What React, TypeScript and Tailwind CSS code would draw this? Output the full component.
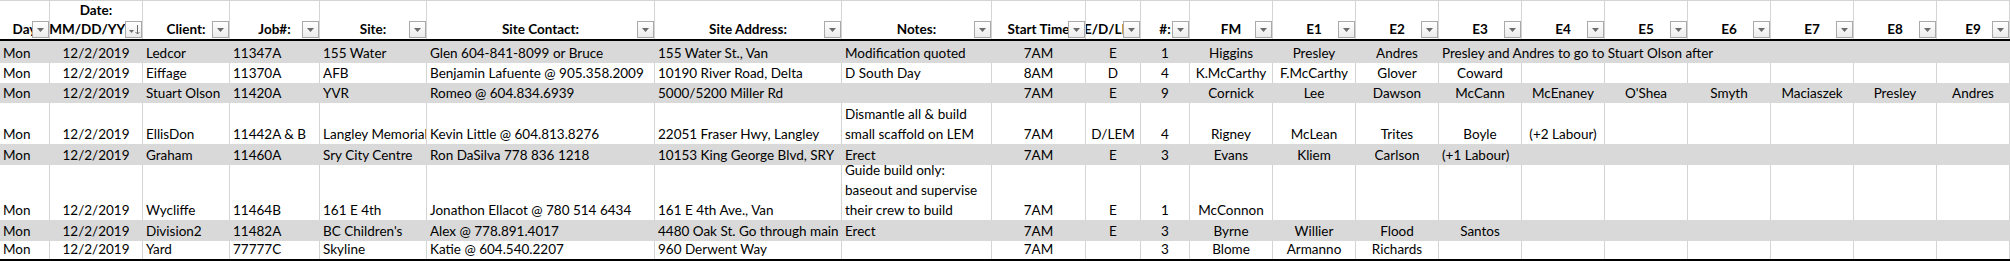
import React from 'react';

type Align = 'left' | 'center';
type Cell = string | string[] | { text: string; spill: true };

const COLS: { w: number; align: Align }[] = [
  { w: 50, align: 'left' },
  { w: 93, align: 'center' },
  { w: 87, align: 'left' },
  { w: 90, align: 'left' },
  { w: 107, align: 'left' },
  { w: 228, align: 'left' },
  { w: 187, align: 'left' },
  { w: 150, align: 'left' },
  { w: 94, align: 'center' },
  { w: 55, align: 'center' },
  { w: 49, align: 'center' },
  ...Array.from({ length: 9 }, () => ({ w: 83, align: 'center' as Align })),
  { w: 73, align: 'center' },
];

const HEADERS: string[][] = [
  ['Day'],
  ['Date:', 'MM/DD/YYYY'],
  ['Client:'],
  ['Job#:'],
  ['Site:'],
  ['Site Contact:'],
  ['Site Address:'],
  ['Notes:'],
  ['Start Time'],
  ['E/D/LEM'],
  ['#:'],
  ['FM'],
  ['E1'],
  ['E2'],
  ['E3'],
  ['E4'],
  ['E5'],
  ['E6'],
  ['E7'],
  ['E8'],
  ['E9'],
];

const ROWS: { h: string; gray: boolean; cells: Cell[] }[] = [
  {
    h: 'h-[22px]',
    gray: true,
    cells: ['Mon', '12/2/2019', 'Ledcor', '11347A', '155 Water', 'Glen 604-841-8099 or Bruce', '155 Water St., Van', 'Modification quoted', '7AM', 'E', '1', 'Higgins', 'Presley', 'Andres', { text: 'Presley and Andres to go to Stuart Olson after', spill: true }],
  },
  {
    h: 'h-[20px]',
    gray: false,
    cells: ['Mon', '12/2/2019', 'Eiffage', '11370A', 'AFB', 'Benjamin Lafuente @ 905.358.2009', '10190 River Road, Delta', 'D South Day', '8AM', 'D', '4', 'K.McCarthy', 'F.McCarthy', 'Glover', 'Coward'],
  },
  {
    h: 'h-[20px]',
    gray: true,
    cells: ['Mon', '12/2/2019', 'Stuart Olson', '11420A', 'YVR', 'Romeo @ 604.834.6939', '5000/5200 Miller Rd', '', '7AM', 'E', '9', 'Cornick', 'Lee', 'Dawson', 'McCann', 'McEnaney', "O'Shea", 'Smyth', 'Maciaszek', 'Presley', 'Andres'],
  },
  {
    h: 'h-[41px]',
    gray: false,
    cells: ['Mon', '12/2/2019', 'EllisDon', '11442A & B', 'Langley Memorial', 'Kevin Little @ 604.813.8276', '22051 Fraser Hwy, Langley', ['Dismantle all & build', 'small scaffold on LEM'], '7AM', 'D/LEM', '4', 'Rigney', 'McLean', 'Trites', 'Boyle', '(+2 Labour)'],
  },
  {
    h: 'h-[21px]',
    gray: true,
    cells: ['Mon', '12/2/2019', 'Graham', '11460A', 'Sry City Centre', 'Ron DaSilva 778 836 1218', '10153 King George Blvd, SRY', 'Erect', '7AM', 'E', '3', 'Evans', 'Kliem', 'Carlson', { text: '(+1 Labour)', spill: true }],
  },
  {
    h: 'h-[55px]',
    gray: false,
    cells: ['Mon', '12/2/2019', 'Wycliffe', '11464B', '161 E 4th', 'Jonathon Ellacot @ 780 514 6434', '161 E 4th Ave., Van', ['Guide build only:', 'baseout and supervise', 'their crew to build'], '7AM', 'E', '1', 'McConnon'],
  },
  {
    h: 'h-[21px]',
    gray: true,
    cells: ['Mon', '12/2/2019', 'Division2', '11482A', "BC Children's", 'Alex @ 778.891.4017', '4480 Oak St. Go through main', 'Erect', '7AM', 'E', '3', 'Byrne', 'Willier', 'Flood', 'Santos'],
  },
  {
    h: 'h-[18px]',
    gray: false,
    cells: ['Mon', '12/2/2019', 'Yard', '77777C', 'Skyline', 'Katie @ 604.540.2207', '960 Derwent Way', '', '7AM', '', '3', 'Blome', 'Armanno', 'Richards'],
  },
];

function FilterButton({ sorted }: { sorted?: boolean }) {
  return (
    <div className="absolute right-0 bottom-[1px] h-[17px] w-[17px] border border-[#a9a9a9] bg-gradient-to-b from-white to-[#ececec]">
      <svg width="15" height="15" viewBox="0 0 15 15" className="block">
        {sorted ? (
          <>
            <polygon points="3,8 8,8 5.5,11" fill="#6b6b6b" />
            <line x1="11.5" y1="3" x2="11.5" y2="12" stroke="#6b6b6b" strokeWidth="1" />
            <polyline points="9.5,10 11.5,12 13.5,10" fill="none" stroke="#6b6b6b" strokeWidth="1" />
          </>
        ) : (
          <polygon points="4,6 11,6 7.5,10" fill="#6b6b6b" />
        )}
      </svg>
    </div>
  );
}

export default function App() {
  return (
    <div
      className="w-[2010px] h-[261px] overflow-hidden bg-white text-black"
      style={{ fontFamily: 'Lato, "Liberation Sans", sans-serif' }}
    >
      <div className="flex h-[41px] border-t border-[#d4d4d4] border-b-2 border-b-black">
        {HEADERS.map((lines, i) => (
          <div
            key={i}
            style={{ width: COLS[i].w }}
            className="relative flex shrink-0 flex-col items-center justify-end overflow-x-clip border-r border-[#d4d4d4] text-[13.5px] font-bold leading-[19px]"
          >
            {lines.map((l) => (
              <div key={l} className="whitespace-nowrap">
                {l}
              </div>
            ))}
            <FilterButton sorted={i === 1} />
          </div>
        ))}
      </div>

      {ROWS.map((row, r) => (
        <div key={r} className={`flex ${row.h} ${row.gray ? 'bg-[#d9d9d9]' : 'bg-white'}`}>
          {COLS.map((col, i) => {
            const cell = row.cells[i] ?? '';
            const spill = typeof cell === 'object' && !Array.isArray(cell);
            const lines = Array.isArray(cell) ? cell : [spill ? (cell as { text: string }).text : (cell as string)];
            return (
              <div
                key={i}
                style={{ width: col.w }}
                className={`flex shrink-0 flex-col justify-end px-[3px] text-[13.5px] leading-[20px] ${
                  row.gray ? 'border-r border-transparent' : 'border-r border-[#d4d4d4]'
                } ${spill ? 'items-start overflow-visible px-[2px]' : 'overflow-x-clip'} ${
                  !spill && col.align === 'center' ? 'items-center' : ''
                }`}
              >
                {lines.map((l, k) => (
                  <div key={k} className="whitespace-nowrap">
                    {l}
                  </div>
                ))}
              </div>
            );
          })}
        </div>
      ))}
      <div className="h-[2px] bg-black" />
    </div>
  );
}
